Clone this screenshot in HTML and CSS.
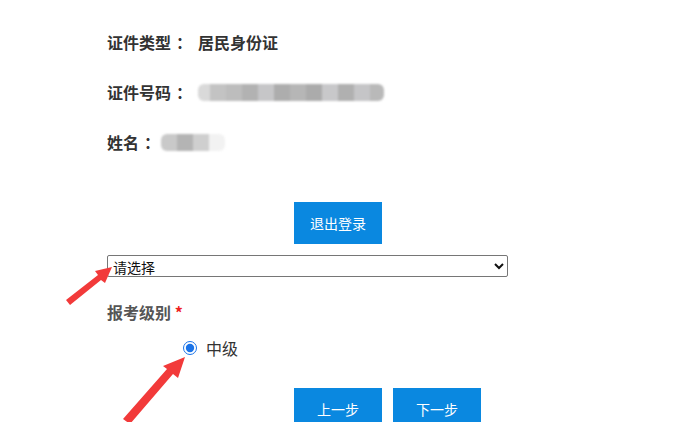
FILE: index.html
```html
<!doctype html>
<html lang="zh-CN">
<head>
<meta charset="utf-8">
<title>报考信息</title>
<link rel="stylesheet" href="styles.css">
</head>
<body>

<div id="page">
  <div class="info-row">证件类型<span class="colon">：</span><span class="value">居民身份证</span></div>
  <div class="info-row">证件号码<span class="colon">：</span><span class="mask mask-id"><i></i><i></i><i></i><i></i><i></i><i></i><i></i><i></i><i></i><i></i><i></i><i></i></span></div>
  <div class="info-row">姓名<span class="colon">：</span><span class="mask mask-name"><i></i><i></i><i></i><i></i></span></div>

  <div class="logout-row"><button class="btn">退出登录</button></div>

  <select class="picker">
    <option>请选择</option>
  </select>

  <div class="field-label">报考级别 <span class="req">*</span></div>

  <label class="radio-row"><input type="radio" name="level" checked> 中级</label>

  <div class="step-row">
    <button class="btn">上一步</button>
    <button class="btn">下一步</button>
  </div>
</div>

<svg id="marks" width="700" height="422" viewBox="0 0 700 422">
  <polygon fill="#f23a3a" points="66,300 98,275 95,271 112,267 105,283 101,280 70,305"/>
  <polygon fill="#f23a3a" points="123,419 167,369 163,366 185,357 178,378 173,374 130,424"/>
</svg>

</body>
</html>
```

FILE: styles.css
```css
body {
  margin: 0;
  background: #fff;
  font-family: "Microsoft YaHei", "Noto Sans CJK SC", sans-serif;
  color: #333;
  overflow: hidden;
}
#page {
  padding: 32px 0 0 107px;
  display: flex;
  flex-direction: column;
  align-items: flex-start;
}
.info-row {
  height: 20px;
  line-height: 20px;
  font-size: 16px;
  font-weight: bold;
  margin-bottom: 30px;
  display: flex;
  align-items: center;
  color: #333;
}
.info-row .colon {
  padding-left: 5px;
  width: 22px;
}
.mask {
  display: flex;
  height: 17px;
  filter: blur(0.8px);
  border-radius: 6px;
  overflow: hidden;
}
.mask i {
  width: 16px;
  height: 17px;
  background: #c4c4c4;
}
.mask-id i:nth-child(1) { background: #d9d9d9; width: 12px; }
.mask-id i:nth-child(2) { background: #c3c3c3; }
.mask-id i:nth-child(3) { background: #bdbdbd; }
.mask-id i:nth-child(4) { background: #b2b2b2; }
.mask-id i:nth-child(5) { background: #c6c6c8; }
.mask-id i:nth-child(6) { background: #adadad; }
.mask-id i:nth-child(7) { background: #b6b6b6; }
.mask-id i:nth-child(8) { background: #ababab; }
.mask-id i:nth-child(9) { background: #c8c8ca; }
.mask-id i:nth-child(10) { background: #b0b0b0; }
.mask-id i:nth-child(11) { background: #c5c5c7; }
.mask-id i:nth-child(12) { background: #b9b9b9; width: 14px; }
.mask-name {
  margin-left: -5px;
}
.mask-name i:nth-child(1) { background: #c9c9c9; }
.mask-name i:nth-child(2) { background: #b4b4b4; }
.mask-name i:nth-child(3) { background: #cfcfcf; }
.mask-name i:nth-child(4) { background: #f2f2f2; }

.btn {
  width: 88px;
  height: 42px;
  border: none;
  background: #0a88e0;
  color: #fff;
  font-family: inherit;
  font-size: 14px;
  padding: 0;
}
.logout-row {
  margin: 20px 0 0 187px;
}
.picker {
  margin-top: 11px;
  width: 401px;
  height: 22px;
  font-family: inherit;
  font-size: 14px;
  color: #111;
  border: 1px solid #767676;
  border-radius: 2px;
  background: #fff;
  padding: 0 1px;
}
.field-label {
  margin-top: 25px;
  height: 20px;
  line-height: 20px;
  font-size: 16px;
  font-weight: bold;
  color: #555;
}
.req {
  color: #e22;
}
.radio-row {
  margin: 16px 0 0 76px;
  height: 20px;
  line-height: 20px;
  font-size: 16px;
  color: #333;
  display: flex;
  align-items: center;
  gap: 5px;
}
.radio-row input {
  margin: 0 4px 0 0;
  width: 14px;
  height: 14px;
  accent-color: #1a73e8;
}
.step-row {
  margin: 30px 0 0 187px;
  display: flex;
  gap: 11px;
}
#marks {
  position: absolute;
  left: 0;
  top: 0;
  pointer-events: none;
}
```
